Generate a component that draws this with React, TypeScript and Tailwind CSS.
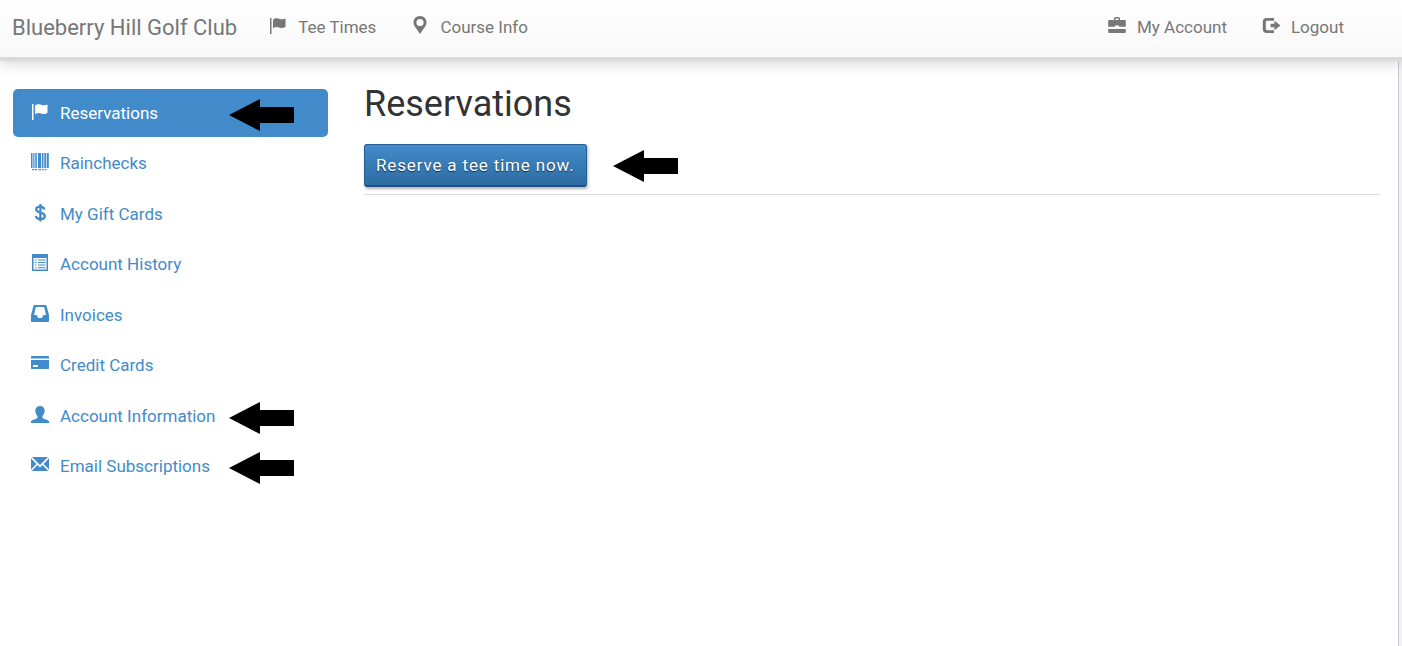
import React from 'react';

type IconName =
  | 'flag'
  | 'marker'
  | 'briefcase'
  | 'logout'
  | 'barcode'
  | 'dollar'
  | 'list'
  | 'inbox'
  | 'card'
  | 'user'
  | 'envelope';

interface NavItem {
  label: string;
  icon: IconName;
}

interface MenuItem extends NavItem {
  active?: boolean;
  marked?: boolean;
}

const leftNav: NavItem[] = [
  { label: 'Tee Times', icon: 'flag' },
  { label: 'Course Info', icon: 'marker' },
];

const rightNav: NavItem[] = [
  { label: 'My Account', icon: 'briefcase' },
  { label: 'Logout', icon: 'logout' },
];

const menu: MenuItem[] = [
  { label: 'Reservations', icon: 'flag', active: true, marked: true },
  { label: 'Rainchecks', icon: 'barcode' },
  { label: 'My Gift Cards', icon: 'dollar' },
  { label: 'Account History', icon: 'list' },
  { label: 'Invoices', icon: 'inbox' },
  { label: 'Credit Cards', icon: 'card' },
  { label: 'Account Information', icon: 'user', marked: true },
  { label: 'Email Subscriptions', icon: 'envelope', marked: true },
];

// All glyphs share an 18x18 box
const glyphs: Record<IconName, React.ReactNode> = {
  flag: (
    <>
      <path d="M1 1h1.500v16H1z" />
      <path d="M4 2.600C6 1 8 .9 10.300 1.700 12.500 2.500 14.500 2.500 16.500 1.500v8.300c-2.100 1.400-4.200 1.500-6.400.6C8.200 9.500 6 9.800 4 11.200z" />
    </>
  ),
  marker: (
    <path
      fillRule="evenodd"
      d="M9-1C5.300-1 2.500 1.800 2.500 5.400c0 1.500.5 2.700 1.200 3.900L9 17l5.300-7.700c.7-1.200 1.200-2.400 1.200-3.900C15.500 1.800 12.700-1 9-1zm0 2.900a3.600 3.600 0 1 1 0 7.200 3.600 3.600 0 0 1 0-7.200z"
    />
  ),
  briefcase: (
    <>
      <path
        fillRule="evenodd"
        d="M6 3V1.800C6 .8 6.700 0 7.700 0h2.600c1 0 1.700.8 1.700 1.800V3h4.500c.8 0 1.300.5 1.300 1.300V9.800H11V8.500H7v1.300H.2V4.300C.2 3.500.7 3 1.500 3zm1.400 0h3.200V1.900c0-.3-.2-.5-.5-.5H7.900c-.3 0-.5.2-.5.5z"
      />
      <path d="M.2 12h17.600v3c0 .6-.4 1-1 1H1.200c-.6 0-1-.4-1-1z" />
    </>
  ),
  logout: (
    <>
      <path d="M12 1v2.800H5.400C4.400 3.800 3.800 4.400 3.800 5.400v6.200c0 1 .6 1.600 1.600 1.600H12V16H4.600C2.200 16 .8 14.500.8 12.200V4.800C.8 2.500 2.200 1 4.600 1z" />
      <path d="M12.500 3.800 18.500 8.500l-6 4.700v-2.900H8.600V6.700h3.900z" />
    </>
  ),
  barcode: (
    <path d="M0 0h1.500v15H0zM2.300 0h1.200v15H2.300zM4.300 0h1.500v15H4.300zM7 0h3.200v15H7zM11 0h1.500v15H11zM13.300 0h2v15h-2zM16 0h1.800v15H16zM1 16h2.400v1.200H1zM4.200 16h1.800v1.200H4.200zM7.500 16h2.500v1.200H7.500zM11 16h1.500v1.200H11zM13.500 16h2v1.200h-2z" />
  ),
  dollar: (
    <path
      d="M13.300 5.400C12.900 3.600 11.400 2.600 9.200 2.600 6.900 2.600 5.200 3.600 5.200 5.400c0 4.300 8.600 2 8.600 6.600 0 2-1.800 3.100-4.300 3.100-2.700 0-4.300-1.200-4.600-3.200M9.400 0v17.600"
      fill="none"
      stroke="currentColor"
      strokeWidth="2.300"
    />
  ),
  list: (
    <path
      fillRule="evenodd"
      d="M1 0h16v17H1zm1.500 4v11.500h13V4zM4 5.400h1.500v1H4zm3 0h7.500v1H7zM4 8h1.500v1H4zm3 0h7.500v1H7zm-3 2.600h1.500v1H4zm3 0h7.500v1H7zm-3 2.600h1.500v1H4zm3 0h7.500v1H7z"
    />
  ),
  inbox: (
    <path
      fillRule="evenodd"
      d="M3.600 0h10.800c.6 0 1 .3 1.100.8L18 10v6c0 .6-.4 1-1 1H1c-.6 0-1-.4-1-1v-6L2.500.8c.1-.5.5-.8 1.100-.8zm1.200 2L3 10h2.700l1.400 2.900h3.800L12.300 10H15l-1.800-8z"
    />
  ),
  card: (
    <path
      fillRule="evenodd"
      d="M1 1h16c.6 0 1 .4 1 1v1.500H0V2c0-.6.4-1 1-1zM0 5h18v8c0 .6-.4 1-1 1H1c-.6 0-1-.4-1-1zM2 10v2h5v-2z"
    />
  ),
  user: (
    <path d="M9 0C6.300 0 4.300 1.900 4.300 4.600c0 2.200.9 4.200 2.200 5.500v1.300c0 .5-.3.800-.7 1L1.200 14.200C.4 14.600 0 15 0 15.800V17h18v-1.200c0-.8-.4-1.200-1.200-1.600l-4.600-1.800c-.4-.2-.7-.5-.7-1v-1.300c1.300-1.300 2.200-3.300 2.200-5.500C13.700 1.900 11.700 0 9 0z" />
  ),
  envelope: (
    <path d="M1 1h16L9 8.900zM0 2.300 5.400 7.900 0 13.500zM18 2.300v11.200l-5.400-5.600zM6.500 9 9 11.400 11.500 9 17.300 15H.7z" />
  ),
};

const Icon: React.FC<{ name: IconName }> = ({ name }) => (
  <svg viewBox="0 0 18 18" className="h-[18px] w-[18px] shrink-0 overflow-visible fill-current" aria-hidden="true">
    {glyphs[name]}
  </svg>
);

const Pointer: React.FC<{ className?: string }> = ({ className = '' }) => (
  <svg viewBox="0 0 65 32" className={`h-8 w-[65px] shrink-0 fill-black ${className}`} aria-hidden="true">
    <path d="M0 16 31 0v8h34v16H31v8z" />
  </svg>
);

const NavLink: React.FC<NavItem> = ({ label, icon }) => (
  <a href="#" className="flex items-start gap-[11px] hover:text-[#333]">
    <Icon name={icon} />
    <span className="leading-5">{label}</span>
  </a>
);

const App: React.FC = () => {
  return (
    <div className="min-h-screen bg-[#f0f1f3] pr-[3px] font-[Roboto,sans-serif] text-[17px] text-[#333]">
      <header className="relative z-10 -mr-[3px] flex h-[57px] items-start justify-between bg-linear-to-b from-white to-[#f8f8f8] pl-3 pr-[58px] pt-[17px] text-[#777] shadow-[0_4px_1px_#dadada,0_6px_14px_rgba(0,0,0,0.18)]">
        <div className="flex items-start gap-8">
          <a href="#" className="text-[22px] leading-[22px]">
            Blueberry Hill Golf Club
          </a>
          <nav className="flex gap-[35px]">
            {leftNav.map(item => (
              <NavLink key={item.label} {...item} />
            ))}
          </nav>
        </div>
        <nav className="flex gap-[35px]">
          {rightNav.map(item => (
            <NavLink key={item.label} {...item} />
          ))}
        </nav>
      </header>

      <div className="flex min-h-[calc(100vh-57px)] items-start gap-9 border-r border-[#c8ccd0] bg-white pl-[13px] pr-[18px] pt-8">
        {/* Account menu */}
        <nav className="flex min-h-[401px] w-[315px] shrink-0 flex-col justify-between">
          {menu.map(item => (
            <a
              key={item.label}
              href="#"
              className={`relative flex h-12 items-start gap-[11px] rounded-[5px] pl-[18px] pt-[14px] ${
                item.active ? 'bg-[#428bca] text-white' : 'text-[#428bca] hover:bg-[#eee]'
              }`}
            >
              <Icon name={item.icon} />
              <span className="leading-5">{item.label}</span>
              {item.marked && <Pointer className="absolute left-[216px] top-[10px]" />}
            </a>
          ))}
        </nav>

        <main className="min-w-0 flex-1">
          <h1 className="text-[36px] leading-[30px]">Reservations</h1>
          <div className="flex items-center gap-[26px] border-b border-[#ddd] pb-[7px] pt-[25px]">
            <button
              type="button"
              className="h-[43px] cursor-pointer rounded-[3px] border border-b-2 border-[#245f94] border-b-[#1f4f7c] bg-linear-to-b from-[#428bca] to-[#2d6ca2] px-[11px] pt-0.5 tracking-wider text-white shadow-[1px_2px_3px_rgba(0,0,0,0.3)] [text-shadow:0_1px_1px_rgba(0,0,0,0.6)]"
            >
              Reserve a tee time now.
            </button>
            <Pointer />
          </div>
        </main>
      </div>
    </div>
  );
};

export default App;
